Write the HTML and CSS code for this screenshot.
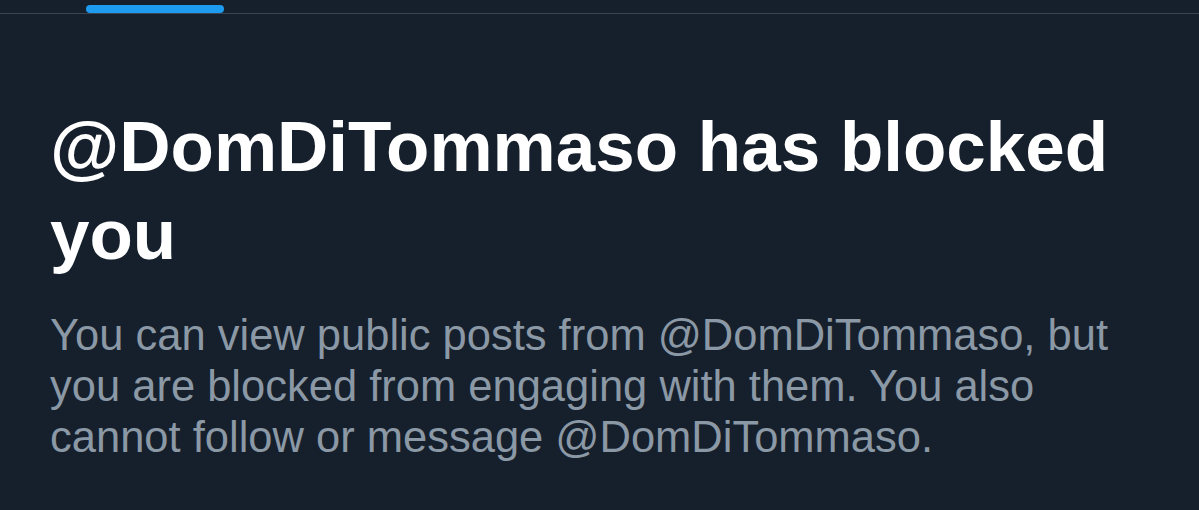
FILE: index.html
```html
<!DOCTYPE html>
<html lang="en">
<head>
    <meta charset="UTF-8">
    <meta name="viewport" content="width=device-width, initial-scale=1.0">
    <title>Blocked</title>
    <link rel="stylesheet" href="styles.css">
</head>
<body>
    <div class="tabs">
        <div class="tab active"><span class="indicator"></span></div>
    </div>

    <div class="notice">
        <h1 class="title">@DomDiTommaso has blocked you</h1>
        <p class="text">You can view public posts from @DomDiTommaso, but you are blocked from engaging with them. You also cannot follow or message @DomDiTommaso.</p>
    </div>
</body>
</html>
```
FILE: styles.css
```css
body {
    background-color: #16202c;
    color: #ffffff;
    font-family: 'Liberation Sans', Arial, sans-serif;
    margin: 0;
    padding: 0;
    height: 510px;
    overflow: hidden;
}

.tabs {
    height: 13px;
    border-bottom: 1px solid #3a4550;
    display: flex;
    padding-left: 86px;
}

.tab {
    width: 138px;
    display: flex;
    align-items: flex-end;
}

.indicator {
    display: block;
    width: 100%;
    height: 8px;
    background: #1d9bf0;
    border-radius: 4px;
}

.notice {
    padding: 89px 50px 0 50px;
}

.title {
    margin: 0;
    font-size: 71px;
    line-height: 88px;
    font-weight: bold;
    max-width: 1090px;
}

.text {
    margin: 31px 0 0 0;
    font-size: 43.5px;
    line-height: 51px;
    color: #8b98a5;
    max-width: 1090px;
}
```
